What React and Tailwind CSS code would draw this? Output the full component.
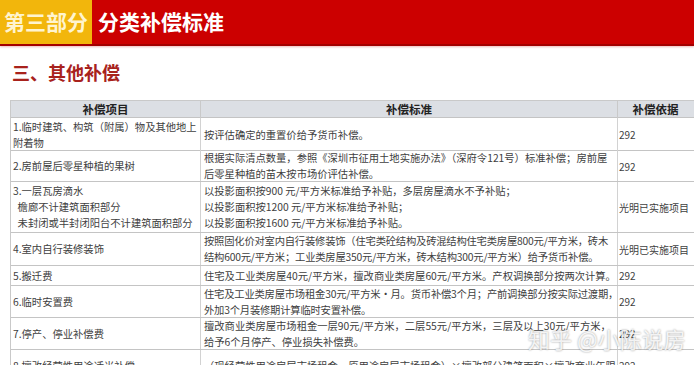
import React from 'react';

const rows = [
  {
    h: 'h-[33px]',
    item: ['1.临时建筑、构筑（附属）物及其他地上', '附着物'],
    itemTop: true,
    std: ['按评估确定的重置价给予货币补偿。'],
    basis: '292',
  },
  {
    h: 'h-[31px]',
    item: ['2.房前屋后零星种植的果树'],
    std: [
      '根据实际清点数量，参照《深圳市征用土地实施办法》（深府令121号）标准补偿；房前屋',
      '后零星种植的苗木按市场价评估补偿。',
    ],
    basis: '292',
  },
  {
    h: 'h-[51px]',
    item: ['3.一层瓦房滴水', '\u00a0\u00a0檐廊不计建筑面积部分', '\u00a0\u00a0未封闭或半封闭阳台不计建筑面积部分'],
    std: [
      '以投影面积按900 元/平方米标准给予补贴，多层房屋滴水不予补贴；',
      '以投影面积按1200 元/平方米标准给予补贴；',
      '以投影面积按1600 元/平方米标准给予补贴。',
    ],
    basis: '光明已实施项目',
  },
  {
    h: 'h-[33px]',
    tight: true,
    item: ['4.室内自行装修装饰'],
    std: [
      '按照固化价对室内自行装修装饰（住宅类砼结构及砖混结构住宅类房屋800元/平方米，砖木',
      '结构600元/平方米；工业类房屋350元/平方米，砖木结构300元/平方米）给予货币补偿。',
    ],
    basis: '光明已实施项目',
  },
  {
    h: 'h-[20px]',
    item: ['5.搬迁费'],
    std: ['住宅及工业类房屋40元/平方米，擅改商业类房屋60元/平方米。产权调换部分按两次计算。'],
    basis: '292',
  },
  {
    h: 'h-[32px]',
    tight: true,
    item: ['6.临时安置费'],
    std: [
      '住宅及工业类房屋市场租金30元/平方米・月。货币补偿3个月；产前调换部分按实际过渡期，',
      '外加3个月装修期计算临时安置补偿。',
    ],
    basis: '292',
  },
  {
    h: 'h-[32px]',
    item: ['7.停产、停业补偿费'],
    std: [
      '擅改商业类房屋市场租金一层90元/平方米，二层55元/平方米，三层及以上30元/平方米，',
      '给予6个月停产、停业损失补偿费。',
    ],
    basis: '292',
  },
  {
    h: 'h-[32px]',
    item: ['8.擅改经营性用途适当补偿'],
    std: [
      '（现经营性用途房屋市场租金－原用途房屋市场租金）×擅改部分建筑面积×擅改商业年限',
      '',
    ],
    basis: '292',
  },
];

function Lines({ lines }) {
  return lines.map((l, i) => (
    <div key={i} className="whitespace-nowrap leading-[16px]">
      {l}
    </div>
  ));
}

export default function App() {
  return (
    <div className="relative w-[694px] h-[365px] overflow-hidden bg-white font-['Noto_Sans_CJK_SC','Noto_Sans',sans-serif]">
      {/* Banner */}
      <div className="flex h-[46px] bg-[#cc0000] border-b-2 border-[#a30000] shadow-[0_1px_2px_rgba(200,60,60,0.35)]">
        <div className="w-[92px] bg-[#f2b60c] flex items-center justify-center text-[21px] font-bold text-[#fff4cf]">
          第三部分
        </div>
        <div className="flex items-center pl-[6px] text-[21px] font-bold text-white">
          分类补偿标准
        </div>
      </div>

      {/* Section title */}
      <div className="h-[54px] pl-[12px] pt-[14px] text-[18px] font-bold leading-[24px] text-[#a8221c]">
        三、其他补偿
      </div>

      {/* Table */}
      <div className="ml-[10px] border-l border-t border-[#c9c9c9] text-[10.3px] text-[#404040]">
        <div className="grid grid-cols-[190px_417px_77px] h-[17px] bg-[#dcdfe4] font-bold text-[11.5px] text-[#222] border-b border-[#c4c4c4]">
          <div className="flex items-center justify-center border-r border-[#c9c9c9]">补偿项目</div>
          <div className="flex items-center justify-center border-r border-[#c9c9c9]">补偿标准</div>
          <div className="flex items-center justify-center pr-[2px]">补偿依据</div>
        </div>
        {rows.map((r, i) => (
          <div key={i} className={`grid grid-cols-[190px_417px_77px] border-b border-[#c4c4c4] ${r.h}`}>
            <div className={`flex flex-col px-[2px] border-r border-[#d2d2d2] ${r.itemTop ? 'justify-start pt-[1px]' : 'justify-center'}`}>
              <Lines lines={r.item} />
            </div>
            <div className={`flex flex-col justify-center px-[3px] border-r border-[#d2d2d2] overflow-hidden ${r.tight ? 'tracking-[-0.2px]' : ''}`}>
              <Lines lines={r.std} />
            </div>
            <div className="flex items-center px-[1px] whitespace-nowrap text-[10px]">{r.basis}</div>
          </div>
        ))}
      </div>

      {/* Watermark */}
      <div className="absolute left-[528px] top-[324px] text-[22px] leading-[28px] text-white/85 [text-shadow:0_0_2px_rgba(0,0,0,0.45)] whitespace-nowrap">
        知乎 @小陈说房
      </div>
    </div>
  );
}
